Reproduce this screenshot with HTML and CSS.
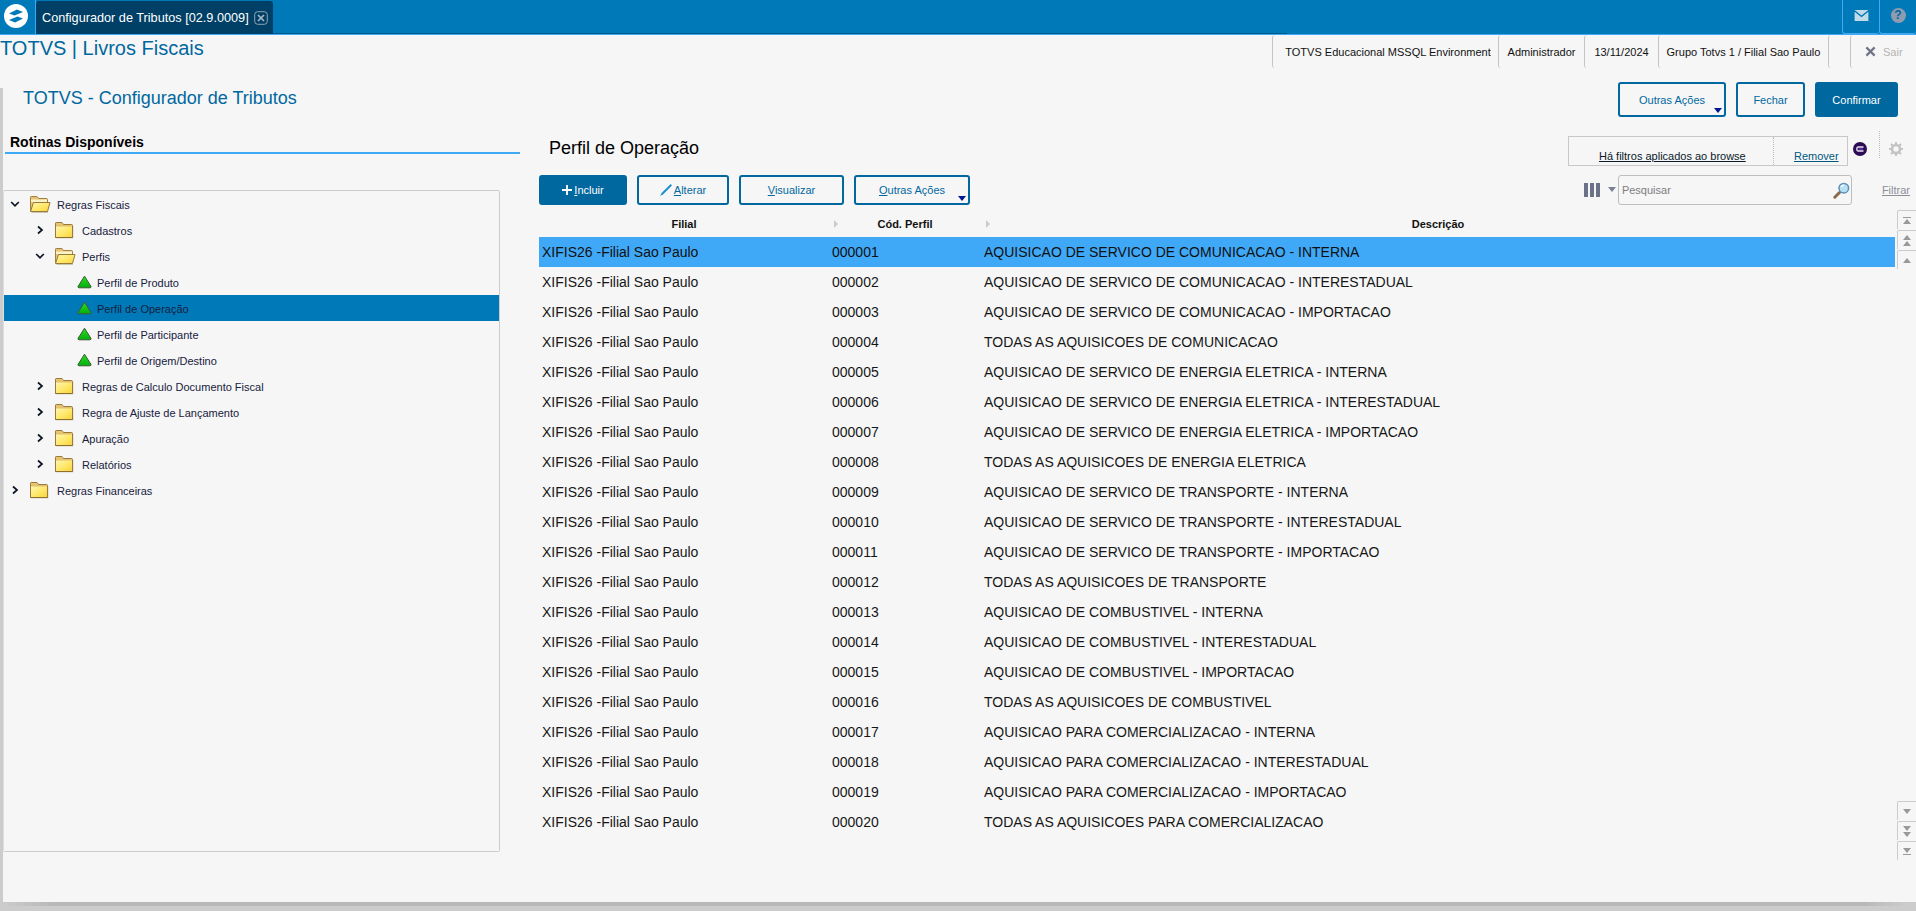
FILE: index.html
```
<!DOCTYPE html>
<html lang="pt-BR">
<head>
<meta charset="utf-8">
<title>Configurador de Tributos</title>
<link rel="stylesheet" href="styles.css">
</head>
<body>
<svg class="defs" width="0" height="0" aria-hidden="true">
  <defs>
    <linearGradient id="fy" x1="0" y1="0" x2="1" y2="1"><stop offset="0" stop-color="#fff6b0"/><stop offset="0.55" stop-color="#ffe768"/><stop offset="1" stop-color="#f7d440"/></linearGradient>
    <linearGradient id="fb" x1="0" y1="0" x2="0" y2="1"><stop offset="0" stop-color="#e9c877"/><stop offset="1" stop-color="#c99f45"/></linearGradient>
    <linearGradient id="gt" x1="0" y1="0" x2="0" y2="1"><stop offset="0" stop-color="#2adf24"/><stop offset="1" stop-color="#04ad0c"/></linearGradient>
    <symbol id="folder-closed" viewBox="0 0 20 18">
      <path d="M2 17.5h17.5V5H2z" fill="#c9c4b4" opacity=".7"/>
      <path d="M1.5 16.5V2.2Q1.5 1.5 2.2 1.5H8L9.5 3.5H17.5Q18.5 3.5 18.5 4.5V16.5Z" fill="url(#fb)" stroke="#9a7a3a"/>
      <path d="M2 5.5H18V16H2Z" fill="url(#fy)"/>
      <path d="M1.5 16.5H18.5" stroke="#8f6f2e" fill="none"/>
    </symbol>
    <symbol id="folder-open" viewBox="0 0 22 18">
      <path d="M1.5 16V2.2Q1.5 1.5 2.2 1.5H8L9.5 3.5H17.5Q18.5 3.5 18.5 4.5V7" fill="#e5c274" stroke="#a08041"/>
      <path d="M2 4.5H18V7H2Z" fill="#fbf3c8"/>
      <path d="M4.5 7.5H21L18.5 16.5H1.5Z" fill="url(#fy)" stroke="#9a7a3a"/>
      <path d="M2.5 17.5H19" stroke="#c9c4b4"/>
    </symbol>
    <symbol id="green-tri" viewBox="0 0 15 14">
      <path d="M7.5 1.2 13.9 11.3Q14.2 12.8 13 12.8H2Q.8 12.8 1.1 11.3Z" fill="url(#gt)" stroke="#3b5a36" stroke-width="1" stroke-linejoin="round"/>
    </symbol>
    <symbol id="chev-right" viewBox="0 0 10 10"><path d="M3 1.5 7 5 3 8.5" fill="none" stroke="#0c1424" stroke-width="1.7"/></symbol>
    <symbol id="chev-down" viewBox="0 0 10 10"><path d="M1.2 3 5 6.8 8.8 3" fill="none" stroke="#0c1424" stroke-width="1.7"/></symbol>
  </defs>
</svg>

<header class="topbar">
  <div class="logo-cell">
    <svg class="logo" viewBox="0 0 24 24" aria-hidden="true">
      <circle cx="12" cy="12" r="12" fill="#fff"/>
      <path d="M5 9.5 13 5.5 19 8 10.5 11.5Z" fill="#0079b8"/>
      <path d="M19 14.5 11 18.5 5 16 13.5 12.5Z" fill="#0079b8"/>
    </svg>
  </div>
  <div class="tab">
    <span class="tab-label">Configurador de Tributos [02.9.0009]</span>
    <svg class="tab-close" viewBox="0 0 14 14" aria-hidden="true">
      <rect x=".7" y=".7" width="12.6" height="12.6" rx="3" fill="none" stroke="#8fa5b4" stroke-width="1"/>
      <path d="M4 4 10 10M10 4 4 10" stroke="#a9b9c4" stroke-width="1.7"/>
    </svg>
  </div>
  <div class="tab-rail"></div>
  <div class="top-spacer"></div>
  <div class="top-btn">
    <svg class="mail-icon" viewBox="0 0 15 12" aria-hidden="true">
      <path d="M0 0H15L7.5 6Z" fill="#c3dbe8"/>
      <path d="M0 2 7.5 8 15 2V12H0Z" fill="#c3dbe8"/>
    </svg>
  </div>
  <div class="top-btn">
    <span class="help-icon">?</span>
  </div>
</header>

<div class="subbar">
  <div class="app-title">TOTVS | Livros Fiscais</div>
  <div class="info-strip">
    <div class="info-cell info-env">TOTVS Educacional MSSQL Environment</div>
    <div class="info-cell info-user">Administrador</div>
    <div class="info-cell info-date">13/11/2024</div>
    <div class="info-cell info-branch">Grupo Totvs 1 / Filial Sao Paulo</div>
    <div class="info-cell info-gap"></div>
    <div class="info-cell info-exit">
      <svg class="exit-x" viewBox="0 0 12 12" aria-hidden="true"><path d="M1.5 1.5 10.5 10.5M10.5 1.5 1.5 10.5" stroke="#6f7487" stroke-width="2.4"/></svg>
      <span class="exit-label">Sair</span>
    </div>
  </div>
</div>

<main class="window">
  <div class="window-head">
    <h1 class="window-title">TOTVS - Configurador de Tributos</h1>
    <div class="window-actions">
      <button class="btn btn-more btn-w108">Outras Ações</button>
      <button class="btn btn-w69">Fechar</button>
      <button class="btn btn-primary btn-w83">Confirmar</button>
    </div>
  </div>

  <div class="content">
    <aside class="side">
      <h2 class="side-title">Rotinas Disponíveis</h2>
      <div class="tree">
        <div class="tree-row lvl0"><svg class="chev"><use href="#chev-down"/></svg><svg class="fold fold-open"><use href="#folder-open"/></svg><span class="tree-text">Regras Fiscais</span></div>
        <div class="tree-row lvl1"><svg class="chev"><use href="#chev-right"/></svg><svg class="fold"><use href="#folder-closed"/></svg><span class="tree-text">Cadastros</span></div>
        <div class="tree-row lvl1"><svg class="chev"><use href="#chev-down"/></svg><svg class="fold fold-open"><use href="#folder-open"/></svg><span class="tree-text">Perfis</span></div>
        <div class="tree-row lvl2"><svg class="tri"><use href="#green-tri"/></svg><span class="tree-text">Perfil de Produto</span></div>
        <div class="tree-row lvl2 tree-selected"><svg class="tri"><use href="#green-tri"/></svg><span class="tree-text">Perfil de Operação</span></div>
        <div class="tree-row lvl2"><svg class="tri"><use href="#green-tri"/></svg><span class="tree-text">Perfil de Participante</span></div>
        <div class="tree-row lvl2"><svg class="tri"><use href="#green-tri"/></svg><span class="tree-text">Perfil de Origem/Destino</span></div>
        <div class="tree-row lvl1"><svg class="chev"><use href="#chev-right"/></svg><svg class="fold"><use href="#folder-closed"/></svg><span class="tree-text">Regras de Calculo Documento Fiscal</span></div>
        <div class="tree-row lvl1"><svg class="chev"><use href="#chev-right"/></svg><svg class="fold"><use href="#folder-closed"/></svg><span class="tree-text">Regra de Ajuste de Lançamento</span></div>
        <div class="tree-row lvl1"><svg class="chev"><use href="#chev-right"/></svg><svg class="fold"><use href="#folder-closed"/></svg><span class="tree-text">Apuração</span></div>
        <div class="tree-row lvl1"><svg class="chev"><use href="#chev-right"/></svg><svg class="fold"><use href="#folder-closed"/></svg><span class="tree-text">Relatórios</span></div>
        <div class="tree-row lvl0"><svg class="chev"><use href="#chev-right"/></svg><svg class="fold"><use href="#folder-closed"/></svg><span class="tree-text">Regras Financeiras</span></div>
      </div>
    </aside>

    <section class="browse">
      <div class="browse-head">
        <h2 class="browse-title">Perfil de Operação</h2>
        <div class="browse-tools">
          <div class="filter-box">
            <a class="filter-msg">Há filtros aplicados ao browse</a>
            <a class="filter-remove">Remover</a>
          </div>
          <svg class="badge" viewBox="0 0 14 14" aria-hidden="true">
            <circle cx="7" cy="7" r="7" fill="#2b0b52"/>
            <path d="M10.5 5H5Q3.8 5 3.8 7T5 9H10.5" fill="none" stroke="#e9e3f2" stroke-width="1.4"/>
            <path d="M5.5 7H10" stroke="#7a3cc0" stroke-width="1.2"/>
          </svg>
          <div class="tool-sep"></div>
          <svg class="gear" viewBox="0 0 14 14" aria-hidden="true">
            <circle cx="7" cy="7" r="4" fill="none" stroke="#c4c4c4" stroke-width="2.6"/>
            <path d="M7 0V3M7 11V14M0 7H3M11 7H14M2 2 4 4M10 10 12 12M12 2 10 4M4 10 2 12" stroke="#c4c4c4" stroke-width="2"/>
          </svg>
        </div>
      </div>

      <div class="toolbar">
        <div class="toolbar-left">
          <button class="btn btn-primary btn-w88"><svg class="plus" viewBox="0 0 11 11" aria-hidden="true"><path d="M5.5 0V11M0 5.5H11" stroke="#fff" stroke-width="2"/></svg><span><u>I</u>ncluir</span></button>
          <button class="btn btn-w92"><svg class="pen" viewBox="0 0 13 13" aria-hidden="true"><path d="M11.5 0 13 1.5 3.5 11 0 13 2 9.5Z" fill="#1d8fd0"/></svg><span><u>A</u>lterar</span></button>
          <button class="btn btn-w105"><span><u>V</u>isualizar</span></button>
          <button class="btn btn-more btn-w116"><span><u>O</u>utras Ações</span></button>
        </div>
        <div class="toolbar-right">
          <div class="col-icon"><i class="col-bar"></i><i class="col-bar"></i><i class="col-bar"></i></div>
          <i class="col-caret"></i>
          <div class="search">
            <span class="search-text">Pesquisar</span>
            <svg class="lens" viewBox="0 0 17 17" aria-hidden="true">
              <path d="M6.5 10.5 1.8 15.2" stroke="#8a6a48" stroke-width="3" stroke-linecap="round"/>
              <circle cx="10.8" cy="6.2" r="4.8" fill="#b8e0f5" stroke="#5c8fb8" stroke-width="1.5"/>
              <path d="M8 5Q9 3.3 11 3.2" stroke="#fff" stroke-width="1.2" fill="none"/>
            </svg>
          </div>
          <a class="filter-link">Filtrar</a>
        </div>
      </div>

      <div class="grid-wrap">
        <div class="grid">
          <div class="grid-head">
            <div class="hcell">Filial</div>
            <div class="hcell hcell-sort">Cód. Perfil</div>
            <div class="hcell hcell-sort">Descrição</div>
          </div>
          <div class="grid-row row-selected"><span>XIFIS26 -Filial Sao Paulo</span><span>000001</span><span>AQUISICAO DE SERVICO DE COMUNICACAO - INTERNA</span></div>
          <div class="grid-row"><span>XIFIS26 -Filial Sao Paulo</span><span>000002</span><span>AQUISICAO DE SERVICO DE COMUNICACAO - INTERESTADUAL</span></div>
          <div class="grid-row"><span>XIFIS26 -Filial Sao Paulo</span><span>000003</span><span>AQUISICAO DE SERVICO DE COMUNICACAO - IMPORTACAO</span></div>
          <div class="grid-row"><span>XIFIS26 -Filial Sao Paulo</span><span>000004</span><span>TODAS AS AQUISICOES DE COMUNICACAO</span></div>
          <div class="grid-row"><span>XIFIS26 -Filial Sao Paulo</span><span>000005</span><span>AQUISICAO DE SERVICO DE ENERGIA ELETRICA - INTERNA</span></div>
          <div class="grid-row"><span>XIFIS26 -Filial Sao Paulo</span><span>000006</span><span>AQUISICAO DE SERVICO DE ENERGIA ELETRICA - INTERESTADUAL</span></div>
          <div class="grid-row"><span>XIFIS26 -Filial Sao Paulo</span><span>000007</span><span>AQUISICAO DE SERVICO DE ENERGIA ELETRICA - IMPORTACAO</span></div>
          <div class="grid-row"><span>XIFIS26 -Filial Sao Paulo</span><span>000008</span><span>TODAS AS AQUISICOES DE ENERGIA ELETRICA</span></div>
          <div class="grid-row"><span>XIFIS26 -Filial Sao Paulo</span><span>000009</span><span>AQUISICAO DE SERVICO DE TRANSPORTE - INTERNA</span></div>
          <div class="grid-row"><span>XIFIS26 -Filial Sao Paulo</span><span>000010</span><span>AQUISICAO DE SERVICO DE TRANSPORTE - INTERESTADUAL</span></div>
          <div class="grid-row"><span>XIFIS26 -Filial Sao Paulo</span><span>000011</span><span>AQUISICAO DE SERVICO DE TRANSPORTE - IMPORTACAO</span></div>
          <div class="grid-row"><span>XIFIS26 -Filial Sao Paulo</span><span>000012</span><span>TODAS AS AQUISICOES DE TRANSPORTE</span></div>
          <div class="grid-row"><span>XIFIS26 -Filial Sao Paulo</span><span>000013</span><span>AQUISICAO DE COMBUSTIVEL - INTERNA</span></div>
          <div class="grid-row"><span>XIFIS26 -Filial Sao Paulo</span><span>000014</span><span>AQUISICAO DE COMBUSTIVEL - INTERESTADUAL</span></div>
          <div class="grid-row"><span>XIFIS26 -Filial Sao Paulo</span><span>000015</span><span>AQUISICAO DE COMBUSTIVEL - IMPORTACAO</span></div>
          <div class="grid-row"><span>XIFIS26 -Filial Sao Paulo</span><span>000016</span><span>TODAS AS AQUISICOES DE COMBUSTIVEL</span></div>
          <div class="grid-row"><span>XIFIS26 -Filial Sao Paulo</span><span>000017</span><span>AQUISICAO PARA COMERCIALIZACAO - INTERNA</span></div>
          <div class="grid-row"><span>XIFIS26 -Filial Sao Paulo</span><span>000018</span><span>AQUISICAO PARA COMERCIALIZACAO - INTERESTADUAL</span></div>
          <div class="grid-row"><span>XIFIS26 -Filial Sao Paulo</span><span>000019</span><span>AQUISICAO PARA COMERCIALIZACAO - IMPORTACAO</span></div>
          <div class="grid-row"><span>XIFIS26 -Filial Sao Paulo</span><span>000020</span><span>TODAS AS AQUISICOES PARA COMERCIALIZACAO</span></div>
        </div>
        <div class="scroller">
          <div class="scroll-group">
            <div class="scroll-btn"><i class="sc-line"></i><i class="sc-up"></i></div>
            <div class="scroll-btn"><i class="sc-up"></i><i class="sc-up"></i></div>
            <div class="scroll-btn"><i class="sc-up"></i></div>
          </div>
          <div class="scroll-group">
            <div class="scroll-btn"><i class="sc-down"></i></div>
            <div class="scroll-btn"><i class="sc-down"></i><i class="sc-down"></i></div>
            <div class="scroll-btn"><i class="sc-down"></i><i class="sc-line"></i></div>
          </div>
        </div>
      </div>
    </section>
  </div>
</main>
</body>
</html>
```
FILE: styles.css
```
* { box-sizing: border-box; }
html, body { margin: 0; padding: 0; }
body {
  width: 1916px;
  height: 911px;
  overflow: hidden;
  display: flex;
  flex-direction: column;
  background: #f6f6f6;
  font-family: "Liberation Sans", Arial, sans-serif;
  font-size: 11px;
  color: #111;
}
.defs { position: absolute; }
h1, h2 { margin: 0; font-weight: normal; }

/* top bar */
.topbar {
  height: 35px;
  flex: none;
  display: flex;
  background: #0079b8;
  border-bottom: 1px solid #3fa9f5;
}
.logo-cell {
  width: 36px;
  height: 34px;
  display: flex;
  align-items: center;
  justify-content: center;
  border-right: 1px solid #3fa9f5;
}
.logo { width: 24px; height: 24px; margin: -2px 0 0 -3px; }
.tab {
  width: 237px;
  height: 33px;
  margin-top: 1px;
  background: #003f66;
  border-radius: 3px 3px 0 0;
  display: flex;
  align-items: center;
  padding-left: 6px;
  gap: 5px;
}
.tab-label { color: #fff; font-size: 12.7px; white-space: nowrap; }
.tab-close { width: 14px; height: 14px; }
.tab-rail { width: 1014px; height: 1px; background: #00598c; align-self: flex-end; }
.top-spacer { flex: 1; }
.top-btn {
  width: 37px;
  height: 34px;
  display: flex;
  align-items: center;
  justify-content: center;
  border-left: 1px solid #3fa9f5;
  border-bottom: 1px solid #3fa9f5;
  border-radius: 0 0 3px 3px;
}
.mail-icon { width: 15px; height: 11px; margin-top: -3px; }
.help-icon {
  width: 15px;
  height: 15px;
  margin-top: -3px;
  border-radius: 50%;
  background: #8f9bb0;
  color: #00699f;
  font-size: 12px;
  font-weight: bold;
  line-height: 15px;
  text-align: center;
}

/* sub bar */
.subbar {
  height: 33px;
  flex: none;
  display: flex;
  justify-content: space-between;
}
.app-title { font-size: 20px; line-height: 26px; color: #00689f; }
.info-strip { display: flex; }
.info-cell {
  height: 33px;
  border-left: 1px solid #c4c4c4;
  border-radius: 3px 0 0 3px;
  display: flex;
  align-items: center;
  justify-content: center;
  font-size: 11px;
  color: #111;
  white-space: nowrap;
}
.info-env { width: 226px; padding-left: 5px; }
.info-user { width: 86px; }
.info-date { width: 74px; }
.info-branch { width: 170px; }
.info-gap { width: 22px; }
.info-exit { width: 66px; justify-content: flex-start; padding-left: 14px; gap: 7px; }
.exit-x { width: 11px; height: 11px; }
.exit-label { color: #b4b4b4; }

/* window */
.window {
  flex: 1;
  min-height: 0;
  margin-top: 20px;
  display: flex;
  flex-direction: column;
  border-left: 3px solid #ccc;
  border-bottom: 9px solid #ccc;
  position: relative;
}
.window::after {
  content: "";
  position: absolute;
  left: 0;
  right: 0;
  bottom: -4px;
  height: 4px;
  background: linear-gradient(90deg, #ccc 0, #b8b8b8 50px, #b8b8b8 1860px, #ccc 1905px);
}
.window-head {
  height: 35px;
  margin-top: -6px;
  flex: none;
  display: flex;
  align-items: center;
  justify-content: space-between;
  padding: 0 18px 0 20px;
}
.window-title { font-size: 18px; color: #00689f; margin-bottom: 3px; }
.window-actions { display: flex; gap: 10px; }

.btn {
  position: relative;
  height: 35px;
  padding: 0;
  display: inline-flex;
  align-items: center;
  justify-content: center;
  background: #f6f6f6;
  border: 2px solid #00689f;
  border-radius: 3px;
  color: #00689f;
  font: 11px "Liberation Sans", Arial, sans-serif;
}
.btn-primary { background: #00689f; color: #fff; }
.btn-more::after {
  content: "";
  position: absolute;
  right: 2px;
  bottom: 2px;
  border-left: 4px solid transparent;
  border-right: 4px solid transparent;
  border-top: 5px solid #00188f;
}
.btn-w108 { width: 108px; }
.btn-w69 { width: 69px; }
.btn-w83 { width: 83px; }
.btn-w88 { width: 88px; height: 30px; gap: 2px; }
.btn-w92 { width: 92px; height: 30px; gap: 2px; }
.btn-w105 { width: 105px; height: 30px; }
.btn-w116 { width: 116px; height: 30px; }
.plus { width: 10px; height: 10px; }
.pen { width: 12px; height: 12px; }

/* layout */
.content { flex: 1; min-height: 0; display: flex; }
.side { width: 517px; flex: none; }
.side-title {
  height: 37px;
  margin-left: 2px;
  padding: 17px 0 0 5px;
  font-size: 14px;
  line-height: 16px;
  font-weight: bold;
  color: #000;
  border-bottom: 2px solid #3fa9f5;
}
.tree {
  width: 497px;
  height: 662px;
  margin-top: 36px;
  border: 1px solid #ccc;
  border-left: 1px solid #ddd;
  border-radius: 2px;
}
.tree-row { height: 26px; display: flex; align-items: center; }
.tree-text { color: #16213d; font-size: 11px; white-space: nowrap; padding-top: 1px; }
.chev { width: 10px; height: 10px; flex: none; }
.fold { width: 20px; height: 18px; flex: none; margin-left: 9px; }
.fold-open { width: 22px; }
.tri { width: 15px; height: 14px; flex: none; }
.lvl0 { padding-left: 6px; }
.lvl1 { padding-left: 31px; }
.lvl0 .tree-text, .lvl1 .tree-text { margin-left: 8px; }
.lvl0 .fold-open + .tree-text, .lvl1 .fold-open + .tree-text { margin-left: 6px; }
.lvl2 { padding-left: 73px; }
.lvl2 .tree-text { margin-left: 5px; }
.tree-selected { background: #0079b8; }

.browse { flex: 1; min-width: 0; padding-left: 19px; display: flex; flex-direction: column; }
.browse-head {
  height: 58px;
  flex: none;
  display: flex;
  justify-content: space-between;
  align-items: flex-start;
}
.browse-title { font-size: 18px; line-height: 22px; color: #000; margin: 20px 0 0 10px; }
.browse-tools { display: flex; align-items: flex-start; padding-top: 14px; }
.filter-box {
  width: 280px;
  height: 30px;
  margin-top: 5px;
  border: 1px solid #c8c8c8;
  display: flex;
  align-items: flex-end;
  font-size: 11px;
  line-height: 15px;
}
.filter-msg {
  width: 205px;
  height: 100%;
  padding: 12px 0 0 30px;
  color: #0a1a2a;
  border-right: 1px dotted #bbb;
  text-decoration: underline;
  white-space: nowrap;
}
.filter-remove { height: 100%; padding: 12px 0 0 20px; color: #00587f; text-decoration: underline; }
.badge { width: 14px; height: 14px; margin: 11px 0 0 5px; }
.tool-sep { width: 0; height: 27px; margin: 0 0 0 12px; border-left: 1px dotted #bbb; }
.gear { width: 14px; height: 14px; margin: 11px 13px 0 9px; }

.toolbar {
  height: 30px;
  flex: none;
  display: flex;
  justify-content: space-between;
}
.toolbar-left { display: flex; gap: 10px; }
.toolbar-right { display: flex; align-items: center; }
.col-icon { display: flex; gap: 2px; margin-right: 8px; }
.col-bar { width: 4px; height: 14px; background: #6c7389; }
.col-caret {
  width: 0;
  height: 0;
  margin: -2px 2px 0 0;
  border-left: 4px solid transparent;
  border-right: 4px solid transparent;
  border-top: 5px solid #7b8094;
}
.search {
  width: 234px;
  height: 30px;
  border: 1px solid #bdbdbd;
  border-radius: 3px;
  display: flex;
  align-items: center;
  justify-content: space-between;
  padding: 0 1px 0 3px;
}
.search-text { color: #7d7d7d; font-size: 11px; }
.lens { width: 17px; height: 17px; }
.filter-link { margin: 0 6px 0 30px; color: #8d8f98; text-decoration: underline; font-size: 11px; }

/* grid */
.grid-wrap { flex: 1; min-height: 0; display: flex; justify-content: space-between; }
.grid { width: 1356px; flex: none; }
.grid-head, .grid-row {
  display: grid;
  grid-template-columns: 290px 152px 1fr;
}
.grid-head { height: 32px; align-items: center; padding-top: 9px; padding-bottom: 3px; }
.hcell {
  position: relative;
  text-align: center;
  font-size: 11px;
  font-weight: bold;
  color: #111;
}
.hcell-sort::before {
  content: "";
  position: absolute;
  left: 5px;
  top: 2px;
  border-top: 4px solid transparent;
  border-bottom: 4px solid transparent;
  border-left: 4px solid #ccc;
}
.grid-row {
  height: 30px;
  align-items: center;
  font-size: 14px;
  color: #161616;
}
.grid-row span { padding-left: 3px; white-space: nowrap; }
.row-selected { background: #3fa9f8; color: #101010; }

.scroller {
  width: 19px;
  flex: none;
  height: 650px;
  margin-top: 5px;
  display: flex;
  flex-direction: column;
  justify-content: space-between;
}
.scroll-group { display: flex; flex-direction: column; gap: 1px; }
.scroll-btn {
  height: 19px;
  border-left: 1px solid #ccc;
  border-top: 1px solid #ccc;
  border-radius: 2px 0 0 0;
  display: flex;
  flex-direction: column;
  align-items: center;
  justify-content: center;
  gap: 1px;
}
.sc-up { width: 0; height: 0; border-left: 4px solid transparent; border-right: 4px solid transparent; border-bottom: 5px solid #999; }
.sc-down { width: 0; height: 0; border-left: 4px solid transparent; border-right: 4px solid transparent; border-top: 5px solid #999; }
.sc-line { width: 8px; height: 1px; background: #999; }
```
